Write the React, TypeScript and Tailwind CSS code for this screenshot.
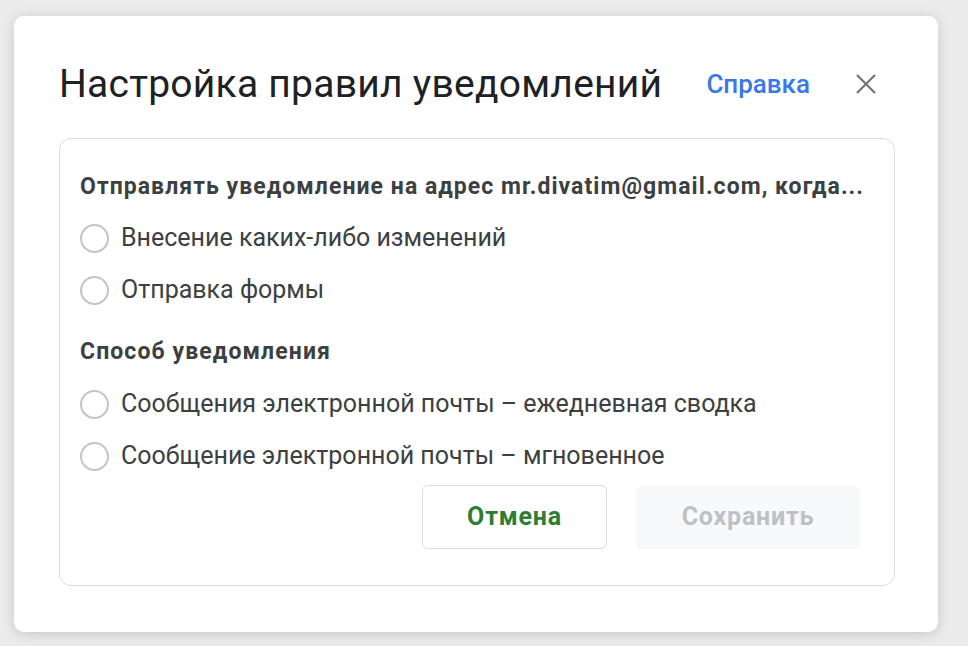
import React from "react";

function Radio({ label }: { label: string }) {
  return (
    <div className="flex h-[52px] items-center">
      <span className="box-border h-[29px] w-[29px] shrink-0 rounded-full border-2 border-[#c4c4c4] bg-white" />
      <span className="ml-[12px] text-[25px] text-[#3c4043]">{label}</span>
    </div>
  );
}

export default function App() {
  return (
    <div
      className="min-h-[646px] w-[968px] bg-[#ececec] pl-[14px] pt-[16px]"
      style={{ fontFamily: "Roboto, 'Noto Sans', sans-serif" }}
    >
      <div className="flex h-[616px] w-[924px] flex-col rounded-[10px] bg-white pb-[46px] pl-[45px] pr-[43px] pt-[44px] shadow-[0_2px_14px_rgba(0,0,0,0.16)]">
        <div className="flex h-[48px] items-center">
          <h1 className="text-[39px] font-normal tracking-[0.25px] text-[#202124]">
            Настройка правил уведомлений
          </h1>
          <a className="ml-auto text-[26px] font-medium text-[#3b78e7]">Справка</a>
          <svg
            className="ml-[46px] mr-[19px]"
            width="20"
            height="20"
            viewBox="0 0 20 20"
            fill="none"
            stroke="#757575"
            strokeWidth="2.2"
          >
            <path d="M1 1 L19 19 M19 1 L1 19" />
          </svg>
        </div>
        <div className="mt-[30px] flex flex-1 flex-col rounded-[12px] border border-[#dadce0] pb-[36px] pl-[20px] pr-[34px] pt-[23px]">
          <div className="flex h-[50px] items-center whitespace-nowrap text-[23px] font-bold tracking-[1.05px] text-[#3c4043]">
            Отправлять уведомление на адрес mr.divatim@gmail.com, когда...
          </div>
          <Radio label="Внесение каких-либо изменений" />
          <Radio label="Отправка формы" />
          <div className="mt-[10px] flex h-[52px] items-center text-[23px] font-bold tracking-[1.1px] text-[#3c4043]">
            Способ уведомления
          </div>
          <Radio label="Сообщения электронной почты – ежедневная сводка" />
          <Radio label="Сообщение электронной почты – мгновенное" />
          <div className="mt-[3px] flex justify-end gap-[29px]">
            <button className="h-[64px] w-[185px] rounded-[6px] border border-[#dadce0] bg-white text-[25px] font-bold tracking-[0.8px] text-[#2e7d32]">
              Отмена
            </button>
            <button className="h-[64px] w-[224px] rounded-[6px] bg-[#f8f9fa] text-[25px] font-bold tracking-[0.8px] text-[#bdc1c6]">
              Сохранить
            </button>
          </div>
        </div>
      </div>
    </div>
  );
}
